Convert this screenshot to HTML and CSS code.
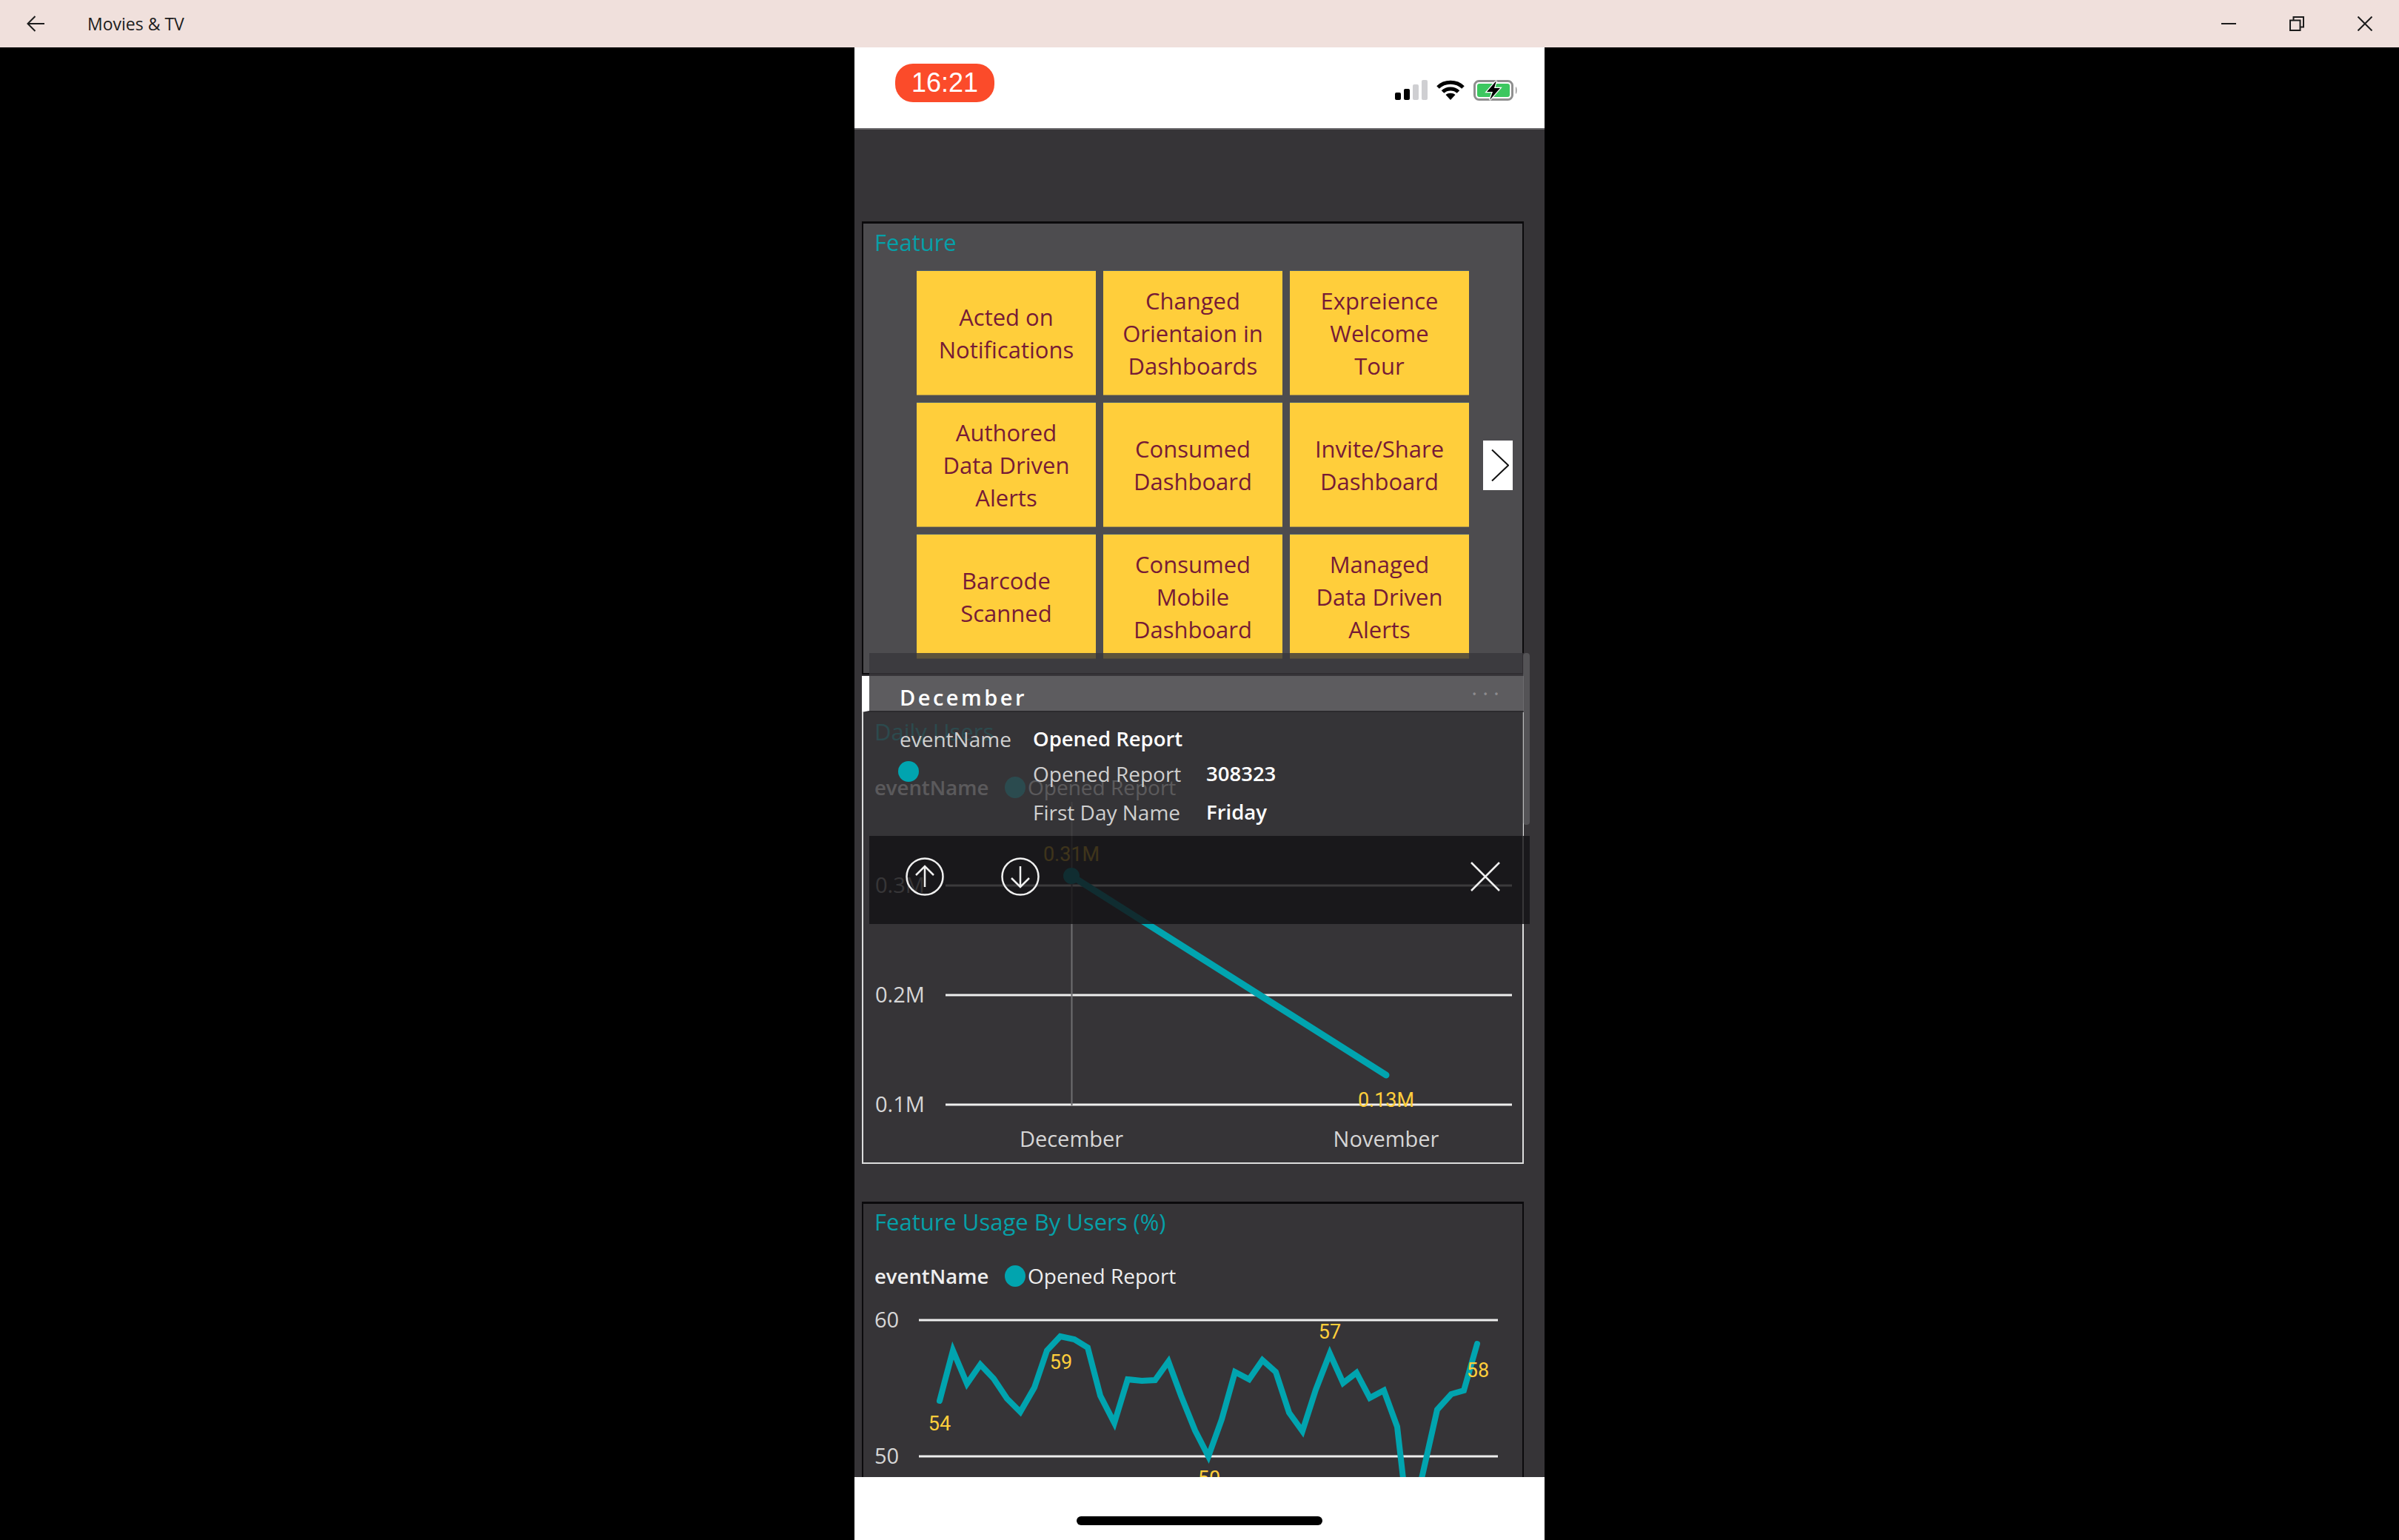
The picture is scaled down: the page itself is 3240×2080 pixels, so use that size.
FILE: index.html
```html
<!DOCTYPE html>
<html lang="en">
<head>
    <meta charset="UTF-8">
    <title>Movies &amp; TV</title>
    <link rel="stylesheet" href="styles.css">
</head>
<body>
    <header class="titlebar">
        <svg class="back-icon" width="24" height="22" viewBox="0 0 24 22"><path d="M24 11H2M11.500 1L1.500 11L11.500 21"/></svg>
        <span class="app-name">Movies &amp; TV</span>
        <div class="win-buttons">
            <svg width="20" height="20" viewBox="0 0 20 20"><path d="M0 10H20"/></svg>
            <svg width="20" height="20" viewBox="0 0 20 20"><path d="M1 5.500H14.500V19H1ZM5.500 5.500V1H19V14.500H14.500"/></svg>
            <svg width="20" height="20" viewBox="0 0 20 20"><path d="M0.500 0.500L19.500 19.500M19.500 0.500L0.500 19.500"/></svg>
        </div>
    </header>

    <div class="stage">
        <div class="phone">
            <div class="status-bar">
                <div class="time-pill">16:21</div>
                <div class="status-icons">
                    <svg width="44" height="28" viewBox="0 0 44 28">
                        <rect x="0" y="17" width="8" height="10" rx="2" fill="#000"/>
                        <rect x="12" y="12" width="8" height="15" rx="2" fill="#000"/>
                        <rect x="24" y="6" width="8" height="21" rx="2" fill="#cfcfd2"/>
                        <rect x="36" y="0" width="8" height="27" rx="2" fill="#cfcfd2"/>
                    </svg>
                    <svg width="38" height="28" viewBox="0 0 38 28" fill="none" stroke="#000" stroke-width="5">
                        <path d="M2 10C11 1 27 1 36 10"/>
                        <path d="M8.500 16C14 10.500 24 10.500 29.500 16"/>
                        <path d="M19 27L12.500 20C16 17 22 17 25.500 20Z" fill="#000" stroke="none"/>
                    </svg>
                    <svg width="60" height="28" viewBox="0 0 60 28">
                        <rect x="1.500" y="1.500" width="51" height="25" rx="6" fill="#fff" stroke="#8f8f8f" stroke-width="3"/>
                        <rect x="5" y="5" width="44" height="18" rx="3" fill="#3cc75f"/>
                        <path d="M57 9C59 10 59 18 57 19Z" fill="#8f8f8f"/>
                        <path d="M31 1L18 16H26L22 27L36 11H28Z" fill="#000" stroke="#fff" stroke-width="2.500" paint-order="stroke"/>
                    </svg>
                </div>
            </div>

            <main class="screen">
                <section class="card card-feature">
                    <h2 class="card-title">Feature</h2>
                    <div class="slicer">
                        <div class="tile-grid">
                            <div class="tile">Acted on<br>Notifications</div>
                            <div class="tile">Changed<br>Orientaion in<br>Dashboards</div>
                            <div class="tile">Expreience<br>Welcome<br>Tour</div>
                            <div class="tile">Authored<br>Data Driven<br>Alerts</div>
                            <div class="tile">Consumed<br>Dashboard</div>
                            <div class="tile">Invite/Share<br>Dashboard</div>
                            <div class="tile">Barcode<br>Scanned</div>
                            <div class="tile">Consumed<br>Mobile<br>Dashboard</div>
                            <div class="tile">Managed<br>Data Driven<br>Alerts</div>
                        </div>
                        <div class="next-btn">
                            <svg width="24" height="43" viewBox="0 0 24 43"><path d="M1 0.500L23 21.500L1 42.500"/></svg>
                        </div>
                    </div>
                </section>

                <section class="card card-daily">
                    <h2 class="card-title">Daily Users</h2>
                    <div class="legend">
                        <span class="legend-name">eventName</span>
                        <span class="legend-dot"></span>
                        <span>Opened Report</span>
                    </div>
                    <svg class="chart chart-daily" viewBox="1166 1083 890 486">
                        <path class="grid-line" d="M1277 1196H2042M1277 1344H2042M1277 1492H2042"/>
                        <path class="cursor-line" d="M1447.500 1083V1493"/>
                        <path class="series" d="M1447 1183L1872 1452"/>
                        <circle class="series-dot" cx="1447" cy="1183" r="11"/>
                        <text class="axis-text" x="1182" y="1206">0.3M</text>
                        <text class="axis-text" x="1182" y="1354">0.2M</text>
                        <text class="axis-text" x="1182" y="1502">0.1M</text>
                        <text class="axis-text mid" x="1447" y="1549">December</text>
                        <text class="axis-text mid" x="1872" y="1549">November</text>
                        <text class="data-label" x="1447" y="1163">0.31M</text>
                        <text class="data-label" x="1872" y="1495">0.13M</text>
                    </svg>
                </section>

                <section class="card card-usage">
                    <h2 class="card-title">Feature Usage By Users (%)</h2>
                    <div class="legend">
                        <span class="legend-name">eventName</span>
                        <span class="legend-dot"></span>
                        <span>Opened Report</span>
                    </div>
                    <svg class="chart chart-usage" viewBox="1166 1743 890 260">
                        <path class="grid-line" d="M1241 1783H2023M1241 1967H2023"/>
                        <polyline class="series thin" points="1269,1892 1287,1824 1306,1869 1324,1843 1342,1862 1360,1889 1378,1907 1397,1874 1414,1824 1432,1805 1451,1809 1469,1820 1486,1885 1505,1922 1523,1863 1542,1865 1560,1864 1578,1839 1595,1885 1614,1932 1632,1967 1650,1917 1668,1853 1687,1863 1705,1837 1723,1853 1741,1908 1759,1933 1777,1877 1796,1828 1814,1868 1832,1854 1850,1888 1869,1878 1887,1927 1895,1997 1900,2030 1915,2030 1920,1997 1941,1904 1960,1883 1977,1878 1995,1815"/>
                        <text class="axis-text" x="1181" y="1793">60</text>
                        <text class="axis-text" x="1181" y="1977">50</text>
                        <text class="data-label" x="1269" y="1932">54</text>
                        <text class="data-label" x="1433" y="1849">59</text>
                        <text class="data-label" x="1796" y="1808">57</text>
                        <text class="data-label" x="1996" y="1860">58</text>
                        <text class="data-label" x="1633" y="2006">50</text>
                    </svg>
                </section>

                <div class="tooltip">
                    <div class="tip-top"></div>
                    <div class="tip-head">
                        <span class="tip-month">December</span>
                        <span class="tip-more">...</span>
                    </div>
                    <div class="tip-body">
                        <span class="tip-label">eventName</span>
                        <span class="tip-value tip-wide">Opened Report</span>
                        <span class="tip-dot"></span>
                        <span class="tip-label">Opened Report</span>
                        <span class="tip-value">308323</span>
                        <span></span>
                        <span class="tip-label">First Day Name</span>
                        <span class="tip-value">Friday</span>
                    </div>
                    <div class="tip-actions">
                        <svg width="52" height="52" viewBox="0 0 52 52"><circle cx="26" cy="26" r="24.500"/><path d="M26 40V12M14 24L26 12L38 24"/></svg>
                        <svg width="52" height="52" viewBox="0 0 52 52"><circle cx="26" cy="26" r="24.500"/><path d="M26 12V40M14 28L26 40L38 28"/></svg>
                        <svg class="tip-close" width="40" height="40" viewBox="0 0 40 40"><path d="M1 1L39 39M39 1L1 39"/></svg>
                    </div>
                    <div class="tip-scroll"></div>
                </div>
            </main>

            <div class="home-area">
                <div class="home-bar"></div>
            </div>
        </div>
    </div>
</body>
</html>
```

FILE: styles.css
```css
html, body { margin: 0; height: 100%; overflow: hidden; }
body { display: flex; flex-direction: column; background: #000; font-family: "Open Sans", "Liberation Sans", sans-serif; }
h2 { margin: 0; font-weight: 400; }

/* window chrome */
.titlebar { height: 64px; flex: none; display: flex; align-items: center; background: #f0e0dc; color: #1c1c1c; }
.titlebar svg { fill: none; stroke: #1c1c1c; stroke-width: 2; }
.back-icon { margin-left: 36px; }
.app-name { margin-left: 58px; font-size: 23px; }
.win-buttons { margin-left: auto; margin-right: 36px; display: flex; gap: 72px; }

.stage { flex: 1; min-height: 0; display: flex; justify-content: center; }
.phone { width: 932px; display: flex; flex-direction: column; }

/* phone status bar */
.status-bar { height: 109px; flex: none; background: #fff; position: relative; display: flex; justify-content: space-between; padding: 22px 36px 0 55px; box-sizing: border-box; }
.time-pill { width: 134px; height: 52px; border-radius: 24px; background: #fb4b2a; color: #fff; font-family: "Liberation Sans", sans-serif; font-size: 36px; line-height: 52px; text-align: center; }
.status-icons { display: flex; gap: 12px; padding-top: 22px; }

.screen { flex: 1; min-height: 0; position: relative; overflow: hidden; background: #363437; padding: 126px 28px 0 10px; border-top: 2px solid #6c6b6e; box-sizing: border-box; }

/* report cards */
.card { box-sizing: border-box; width: 894px; border: solid #0b0a0c; border-width: 3px 2px 2px; }
.card-title { color: #06a0a8; font-size: 31px; line-height: 40px; padding-left: 15px; }
.card-feature { height: 612px; background: #4d4c4f; margin-top: -2px; }
.card-feature .card-title { padding-top: 5px; margin-bottom: 18px; }
.card-daily { height: 659px; margin-top: 2px; border-color: #dcdcdc; }
.card-daily .card-title { padding-top: 52px; }
.card-usage { margin-top: 51px; }
.card-usage .card-title { padding-top: 4px; }

.slicer { display: flex; align-items: flex-start; margin-left: 72px; }
.tile-grid { display: grid; grid-template-columns: repeat(3, 242px); grid-auto-rows: 169px; column-gap: 10px; row-gap: 9px; }
.tile { display: flex; align-items: center; justify-content: center; text-align: center; box-sizing: border-box; background: #ffce3b; border-top: 1px solid #4a6070; border-bottom: 1px solid #b0964a; color: #761b36; font-size: 31px; line-height: 44px; }
.next-btn { width: 40px; height: 67px; margin: 230px 0 0 19px; background: #fff; display: flex; align-items: center; justify-content: center; }
.next-btn svg { fill: none; stroke: #111; stroke-width: 2; margin-left: 6px; }

.legend { display: flex; align-items: center; height: 40px; margin-top: 33px; padding-left: 15px; color: #eee; font-size: 28px; white-space: nowrap; }
.card-daily .legend { margin-top: 35px; }
.legend-name { width: 176px; font-size: 27.500px; font-weight: 600; }
.legend-dot { flex: none; width: 28px; height: 29px; margin-right: 3px; border-radius: 50%; background: #01a4af; }

/* charts, coordinates in the viewBox are page pixels */
.chart { display: block; width: 890px; }
.chart-daily { height: 486px; }
.chart-usage { height: 260px; }
.grid-line { stroke: #eee; stroke-width: 3; fill: none; }
.cursor-line { stroke: #6f6e71; stroke-width: 2; fill: none; }
.series { stroke: #01a4af; stroke-width: 9; fill: none; stroke-linecap: round; stroke-linejoin: miter; }
.series.thin { stroke-width: 8; }
.series-dot { fill: #01a4af; }
.axis-text { fill: #d6d6d6; font-size: 29px; }
.axis-text.mid { text-anchor: middle; }
.data-label { fill: #ffce3b; font-family: Roboto, sans-serif; font-size: 27px; text-anchor: middle; }

/* tooltip lying over the cards */
.tooltip { position: absolute; left: 10px; top: 707px; width: 902px; }
.tip-top { height: 31px; width: 884px; margin-left: 10px; background: rgba(57, 56, 59, 0.81); }
.tip-head { height: 49px; width: 894px; box-sizing: border-box; border-left: 10px solid #fff; border-bottom: 2px solid #2b2a2d; background: #5d5c5f; display: flex; align-items: center; justify-content: space-between; padding: 10px 26px 0 41px; }
.tip-month { color: #fff; font-size: 29px; font-weight: 600; letter-spacing: 3.500px; }
.tip-more { color: #8c8b8e; font-size: 30px; letter-spacing: 7px; line-height: 20px; padding-bottom: 28px; }
.tip-body { height: 167px; width: 891px; margin-left: 2px; box-sizing: border-box; background: rgba(54, 52, 55, 0.8); padding: 16px 0 0 49px; display: grid; grid-template-columns: 180px 234px 1fr; grid-template-rows: 47px 52px 40px; font-size: 28px; line-height: 40px; white-space: nowrap; }
.tip-label { color: #cfcfcf; }
.tip-value { color: #fff; font-size: 27.500px; font-weight: 600; }
.tip-wide { grid-column: span 2; }
.tip-dot { width: 28px; height: 28px; margin: 3px 0 0 -2px; border-radius: 50%; background: #01a4af; }
.tip-actions { height: 119px; margin-left: 10px; padding: 0 40px 10px 49px; box-sizing: border-box; display: flex; align-items: center; gap: 77px; background: rgba(19, 18, 21, 0.82); }
.tip-actions svg { fill: none; stroke: #f0f0f0; stroke-width: 2.500; }
.tip-close { margin-left: auto; }
.tip-scroll { position: absolute; left: 893px; top: 0; width: 9px; height: 232px; border-radius: 4px; background: rgba(130, 130, 132, 0.4); }

/* phone home indicator */
.home-area { height: 85px; flex: none; background: #fff; display: flex; justify-content: center; }
.home-bar { width: 332px; height: 12px; margin-top: 53px; border-radius: 6px; background: #000; }
```
